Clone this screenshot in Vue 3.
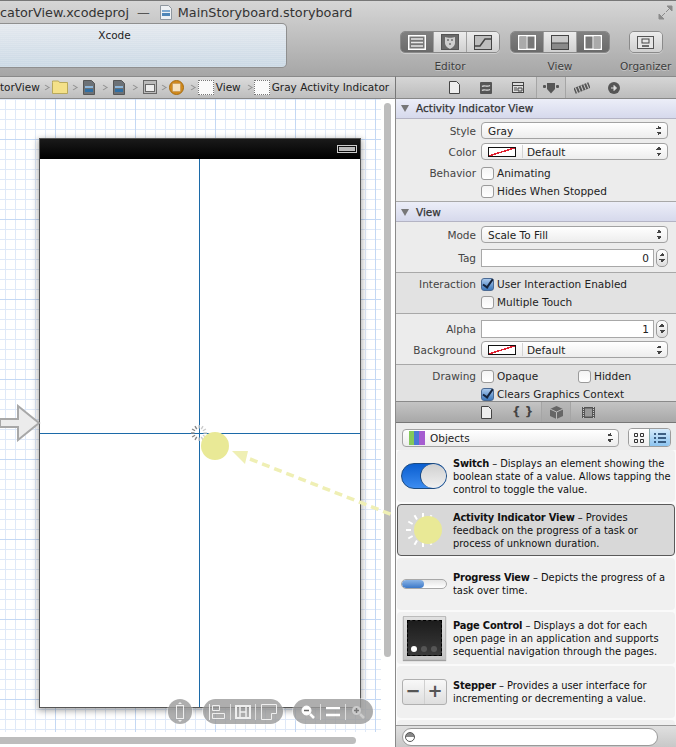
<script setup>
const crumbs = ['folder', 'file', 'file', 'scene', 'vc']
const library = [
  { id: 'switch', name: 'Switch', lines: ['– Displays an element showing the', 'boolean state of a value. Allows tapping the', 'control to toggle the value.'] },
  { id: 'activity', name: 'Activity Indicator View', lines: ['– Provides', 'feedback on the progress of a task or', 'process of unknown duration.'] },
  { id: 'progress', name: 'Progress View', lines: ['– Depicts the progress of a', 'task over time.'] },
  { id: 'page', name: 'Page Control', lines: ['– Displays a dot for each', 'open page in an application and supports', 'sequential navigation through the pages.'] },
  { id: 'stepper', name: 'Stepper', lines: ['– Provides a user interface for', 'incrementing or decrementing a value.'] },
]
const spokes = Array.from({ length: 12 }, (_, i) => i * 30)
</script>

<template>
  <div class="window">
    <header class="toolbar">
      <div class="title">
        <span>catorView.xcodeproj</span>
        <span class="dash">—</span>
        <svg class="doc" width="12" height="15" viewBox="0 0 12 15"><path d="M.5.5h8l3 3v11H.5z" fill="#eef1f4" stroke="#8f979f"/><path d="M2 5h8v2H2z" fill="#7fa9cf"/><path d="M2 8h8v3H2z" fill="#4f86b8"/></svg>
        <span>MainStoryboard.storyboard</span>
      </div>
      <div class="tools">
        <div class="status"><span>Xcode</span></div>
        <div class="tool-group editor">
          <div class="seg-row">
            <div class="seg on first">
              <svg width="18" height="15" viewBox="0 0 18 15"><rect x=".75" y=".75" width="16.5" height="13.5" fill="#777" stroke="#fff" stroke-width="1.5"/><path d="M3 4h12M3 7.500h12M3 11h12" stroke="#e8e8e8" stroke-width="1.300"/></svg>
            </div>
            <div class="seg">
              <svg width="18" height="16" viewBox="0 0 18 16"><rect x=".5" y=".5" width="17" height="15" fill="#6a6a6a" stroke="#555"/><path d="M4 3c2 1 8 1 10 0v6c0 3-3 5-5 6-2-1-5-3-5-6z" fill="#cfcfcf"/><path d="M6 6h2M10 6h2M8 10h2" stroke="#444" stroke-width="1.200"/></svg>
            </div>
            <div class="seg last">
              <svg width="18" height="15" viewBox="0 0 18 15"><rect x=".5" y=".5" width="17" height="14" fill="#bdbdbd" stroke="#444"/><path d="M1 11h5l5-7h6" fill="none" stroke="#444" stroke-width="1.500"/></svg>
            </div>
          </div>
          <span class="tool-label">Editor</span>
        </div>
        <div class="tool-group view">
          <div class="seg-row">
            <div class="seg on first">
              <svg width="18" height="15" viewBox="0 0 18 15"><rect x=".75" y=".75" width="16.5" height="13.5" fill="#777" stroke="#fff" stroke-width="1.500"/><rect x="1.500" y="1.500" width="7" height="12" fill="#aaa"/><path d="M9 1v13" stroke="#fff"/></svg>
            </div>
            <div class="seg">
              <svg width="18" height="15" viewBox="0 0 18 15"><rect x=".5" y=".5" width="17" height="14" fill="#c9c9c9" stroke="#444"/><rect x="1" y="8" width="16" height="6" fill="#8a8a8a"/><path d="M1 8h16" stroke="#444"/></svg>
            </div>
            <div class="seg on last">
              <svg width="18" height="15" viewBox="0 0 18 15"><rect x=".75" y=".75" width="16.5" height="13.5" fill="#777" stroke="#fff" stroke-width="1.500"/><rect x="9.500" y="1.500" width="7" height="12" fill="#aaa"/><path d="M9 1v13" stroke="#fff"/></svg>
            </div>
          </div>
          <span class="tool-label">View</span>
        </div>
        <div class="tool-group organizer">
          <div class="seg-row">
            <div class="seg first last">
              <svg width="17" height="13" viewBox="0 0 17 13"><rect x=".5" y=".5" width="16" height="12" fill="#e6e6e6" stroke="#555"/><rect x="5" y="3" width="7" height="4" fill="none" stroke="#444"/><path d="M5 10h7" stroke="#444" stroke-width="1.500"/></svg>
            </div>
          </div>
          <span class="tool-label">Organizer</span>
        </div>
        <svg class="expand" width="15" height="15" viewBox="0 0 15 15"><path d="M9 1h5v5zM1 9v5h5zM12 3 8 7M3 12l4-4" fill="#8b8b8b" stroke="#8b8b8b"/></svg>
      </div>
    </header>

    <div class="bars">
      <nav class="crumbs">
        <span class="crumb-text">torView</span>
        <template v-for="(c, i) in crumbs" :key="i">
          <i class="chev"></i>
          <svg v-if="c === 'folder'" width="16" height="14" viewBox="0 0 16 14"><path d="M.5 2.500V1h6l1 1.500h8v11H.5z" fill="#f4e189" stroke="#b8a95c"/></svg>
          <svg v-else-if="c === 'file'" class="crumb-file" width="12" height="15" viewBox="0 0 12 15"><path d="M.5.5h8l3 3v11H.5z" fill="#6c7176" stroke="#555"/><path d="M2 6h8v2H2z" fill="#8fb6d8"/><path d="M2 9h8v3H2z" fill="#2f6ea3"/></svg>
          <svg v-else-if="c === 'scene'" class="crumb-scene" width="14" height="14" viewBox="0 0 14 14"><rect x=".5" y=".5" width="13" height="13" fill="#bbb" stroke="#666"/><rect x="2.500" y="4.500" width="9" height="7" fill="#eee" stroke="#666"/></svg>
          <svg v-else class="crumb-vc" width="15" height="15" viewBox="0 0 15 15"><circle cx="7.500" cy="7.500" r="7" fill="#d18a1c" stroke="#a66c12"/><rect x="3.500" y="3.500" width="8" height="8" fill="#f5e2c0" stroke="#b88a4a" stroke-dasharray="1 1"/></svg>
        </template>
        <i class="chev"></i>
        <i class="view-box"></i><span class="crumb-text">View</span>
        <i class="chev wide"></i>
        <i class="view-box"></i><span class="crumb-text">Gray Activity Indicator</span>
      </nav>
      <div class="tabs">
        <svg width="11" height="13" viewBox="0 0 11 13"><path d="M.5.5h7l3 3v9H.5z" fill="#eee" stroke="#444"/></svg>
        <svg width="12" height="12" viewBox="0 0 12 12"><rect width="12" height="12" rx="1" fill="#555"/><path d="M2 4.500c2-2 5 1 8-1M2 8.500c2-2 5 1 8-1" fill="none" stroke="#ddd" stroke-width="1.200"/></svg>
        <svg width="12" height="11" viewBox="0 0 12 11"><rect x=".5" y=".5" width="11" height="10" fill="#ddd" stroke="#444"/><path d="M1 3.500h10M2 6h3M2 8h3M6 6h4v3H6z" stroke="#444" fill="none"/></svg>
        <div class="tab-on">
          <svg width="16" height="12" viewBox="0 0 16 12"><path d="M4 1h8v6l-4 4.500L4 7z" fill="#555"/><rect y="3" width="3" height="3" rx="1" fill="#555"/><rect x="13" y="3" width="3" height="3" rx="1" fill="#555"/></svg>
        </div>
        <svg width="16" height="12" viewBox="0 0 16 12"><g transform="rotate(-22 8 6)"><rect x="0" y="3" width="16" height="6" fill="#555"/><path d="M2 3v6M5 3v6M8 3v6M11 3v6M14 3v6" stroke="#ccc"/></g></svg>
        <svg class="tab-last" width="12" height="12" viewBox="0 0 12 12"><circle cx="6" cy="6" r="6" fill="#555"/><path d="M3 6h4M6 3.500 8.500 6 6 8.500z" stroke="#ddd" fill="#ddd"/></svg>
      </div>
    </div>

    <main class="body">
      <section class="canvas">
        <div class="device">
          <div class="statusbar">
            <span class="battery"><i></i></span>
          </div>
          <div class="screen">
            <i class="guide v"></i>
            <i class="guide h"></i>
            <svg class="spinner" width="20" height="20" viewBox="0 0 20 20">
              <line v-for="a in spokes" :key="a" x1="10" y1="2" x2="10" y2="5.500" :stroke="a > 180 ? '#888' : '#ccc'" stroke-width="1.400" :transform="`rotate(${a} 10 10)`"/>
            </svg>
          </div>
        </div>
        <svg class="entry" width="42" height="38" viewBox="0 0 42 38"><path d="M0 15h18V2l21 17-21 17V23H0z" fill="#ececec" stroke="#a8a8a8" stroke-width="2"/></svg>
        <div class="float-bar one">
          <svg width="14" height="20" viewBox="0 0 14 20"><rect x="3.500" y="3.500" width="7" height="13" fill="none" stroke="#eee"/><path d="M7 0 5 2h4zM7 20l-2-2h4z" fill="#eee"/></svg>
        </div>
        <div class="float-bar two">
          <svg width="16" height="16" viewBox="0 0 16 16"><path d="M.5 0v16M3.500 1.500h7v5h-7zM3.500 9.500h12v5h-12z" fill="none" stroke="#eee"/></svg>
          <i></i>
          <svg width="16" height="14" viewBox="0 0 16 14"><path d="M1 1h14v12H1z" fill="none" stroke="#eee" stroke-width="2"/><path d="M5 2v10M11 2v10M5 7h6" stroke="#eee" stroke-width="1.500"/></svg>
          <i></i>
          <svg width="16" height="16" viewBox="0 0 16 16"><path d="M.5.5h15v9h-5v6H.5z" fill="none" stroke="#eee"/></svg>
        </div>
        <div class="float-bar three">
          <svg width="14" height="14" viewBox="0 0 14 14"><circle cx="5.500" cy="5.500" r="4.500" fill="#fff" stroke="#fff"/><path d="M3 5.500h5" stroke="#666" stroke-width="1.500"/><path d="m9 9 4 4" stroke="#fff" stroke-width="2.500"/></svg>
          <i></i>
          <svg width="14" height="10" viewBox="0 0 14 10"><path d="M0 1h14M0 8h14" stroke="#fff" stroke-width="2.500"/></svg>
          <i></i>
          <svg width="14" height="14" viewBox="0 0 14 14"><circle cx="5.500" cy="5.500" r="4.500" fill="#ccc"/><path d="M3 5.500h5M5.500 3v5" stroke="#777" stroke-width="1.500"/><path d="m9 9 4 4" stroke="#ccc" stroke-width="2.500"/></svg>
        </div>
        <i class="scroll-v"></i>
        <i class="scroll-h"></i>
      </section>

      <aside class="side">
        <div class="inspector">
          <h3 class="section-head"><i class="tri"></i>Activity Indicator View</h3>
          <div class="fields first-fields">
            <div class="row"><label>Style</label><div class="select"><span>Gray</span><i class="updown"></i></div></div>
            <div class="row"><label>Color</label><div class="select"><i class="swatch"></i><b class="sep"></b><span class="swatch-text">Default</span><i class="updown"></i></div></div>
            <div class="row check behavior"><label>Behavior</label><i class="box"></i><span>Animating</span></div>
            <div class="row check"><label></label><i class="box"></i><span>Hides When Stopped</span></div>
          </div>
          <h3 class="section-head second"><i class="tri"></i>View</h3>
          <div class="fields view-a">
            <div class="row"><label>Mode</label><div class="select"><span>Scale To Fill</span><i class="updown"></i></div></div>
            <div class="row tall"><label>Tag</label><div class="input">0</div><div class="stepper-mini"><i></i></div></div>
          </div>
          <div class="fields view-b">
            <div class="row check"><label>Interaction</label><i class="box checked"></i><span>User Interaction Enabled</span></div>
            <div class="row check"><label></label><i class="box"></i><span>Multiple Touch</span></div>
          </div>
          <div class="fields view-c">
            <div class="row tall"><label>Alpha</label><div class="input">1</div><div class="stepper-mini"><i></i></div></div>
            <div class="row"><label>Background</label><div class="select"><i class="swatch"></i><b class="sep"></b><span class="swatch-text">Default</span><i class="updown"></i></div></div>
          </div>
          <div class="fields view-d">
            <div class="row check"><label>Drawing</label><i class="box"></i><span class="opaque">Opaque</span><i class="box"></i><span>Hidden</span></div>
            <div class="row check"><label></label><i class="box checked"></i><span>Clears Graphics Context</span></div>
          </div>
        </div>

        <div class="lib-tabs">
          <svg width="11" height="13" viewBox="0 0 11 13"><path d="M.5.5h7l3 3v9H.5z" fill="#eee" stroke="#444"/></svg>
          <span class="braces">{ }</span>
          <div class="tab-on">
            <svg width="13" height="13" viewBox="0 0 13 13"><path d="M6.500 0 13 3v7l-6.500 3L0 10V3z" fill="#666"/><path d="M0 3l6.500 3L13 3M6.500 6v7" stroke="#bbb" fill="none"/></svg>
          </div>
          <svg width="13" height="11" viewBox="0 0 13 11"><rect width="13" height="11" fill="#555"/><rect x="3" y="1.500" width="7" height="8" fill="#999"/><path d="M1.500 0v11M11.500 0v11" stroke="#ccc" stroke-dasharray="1 1"/></svg>
        </div>

        <div class="lib-filter">
          <div class="select objects">
            <svg width="16" height="14" viewBox="0 0 16 14"><rect width="5" height="14" fill="#84c95a"/><rect x="5" width="5" height="14" fill="#4a78d8"/><rect x="10" width="6" height="14" fill="#a55cd0"/></svg>
            <span>Objects</span><i class="updown"></i>
          </div>
          <div class="view-toggle">
            <div class="toggle">
              <svg width="10" height="10" viewBox="0 0 10 10"><path d="M.5.5h3v3h-3zM6.500.5h3v3h-3zM.5 6.500h3v3h-3zM6.500 6.500h3v3h-3z" fill="none" stroke="#333"/></svg>
            </div>
            <div class="toggle active">
              <svg width="12" height="10" viewBox="0 0 12 10"><path d="M0 1h2M4 1h8M0 5h2M4 5h8M0 9h2M4 9h8" stroke="#14365c" stroke-width="1.300"/></svg>
            </div>
          </div>
        </div>

        <ul class="library">
          <li v-for="item in library" :key="item.id" class="lib-item" :class="{ selected: item.id === 'activity' }">
            <div class="thumb">
              <div v-if="item.id === 'switch'" class="sw"><i></i></div>
              <div v-else-if="item.id === 'activity'" class="ai">
                <svg width="38" height="38" viewBox="0 0 38 38">
                  <line v-for="a in spokes" :key="a" x1="17" y1="2" x2="17" y2="7" stroke="#fff" stroke-width="2" :transform="`rotate(${a} 17 19)`"/>
                  <circle cx="22" cy="19" r="14" fill="#e9e996"/>
                </svg>
              </div>
              <div v-else-if="item.id === 'progress'" class="pv"><i></i></div>
              <div v-else-if="item.id === 'page'" class="pc"><div class="pc-in"><i class="w"></i><i></i><i></i></div></div>
              <div v-else class="st"><span>−</span><span>+</span></div>
            </div>
            <p class="desc">
              <template v-for="(l, i) in item.lines" :key="i"><b v-if="i === 0">{{ item.name }}</b> {{ l }}<br v-if="i < item.lines.length - 1" /></template>
            </p>
          </li>
          <li class="lib-item cut"></li>
        </ul>

        <div class="search"><div class="search-field"><i class="scope"></i></div></div>
      </aside>
    </main>

    <svg class="drag" width="676" height="747" viewBox="0 0 676 747">
      <circle cx="215" cy="446" r="14" fill="#e9e996" />
      <path d="M232 451 248 451 245 464z" fill="#efefb4"/>
      <path d="M250 459 395 516" stroke="#efefb4" stroke-width="3.500" stroke-dasharray="8 5" fill="none"/>
    </svg>
  </div>
</template>

<style scoped>
.window {
  position: relative;
  width: 676px;
  height: 747px;
  overflow: hidden;
  display: flex;
  flex-direction: column;
  background: #f0f0f0;
  color: #1c1c1c;
  font-family: "DejaVu Sans", sans-serif;
  font-size: 10.5px;
}
.toolbar {
  height: 76px;
  flex: none;
  box-sizing: border-box;
  border-top: 1px solid #777;
  background: linear-gradient(#d6d6d6, #a6a6a6);
  display: flex;
  flex-direction: column;
}
.title {
  height: 22px;
  display: flex;
  align-items: center;
  font-size: 12.800px;
  color: #333;
  gap: 8px;
  white-space: nowrap;
}
.dash { color: #555; }
.doc { margin-left: 2px; margin-right: -2px; flex: none; }
.tools {
  position: relative;
  flex: 1;
  display: flex;
}
.status {
  width: 287px;
  flex: none;
  height: 45px;
  box-sizing: border-box;
  border: 1px solid #8f8f8f;
  border-left: 0;
  border-radius: 0 5px 5px 0;
  background: repeating-linear-gradient(#ffffff22 0 1px, #ffffff00 1px 2px), linear-gradient(#e4e9ef, #cbd9e5);
  text-align: center;
  padding: 5px 57px 0 0;
  font-size: 10.5px;
  color: #222;
}
.tool-group {
  display: flex;
  flex-direction: column;
  align-items: center;
  margin-top: 8px;
  flex: none;
}
.editor { margin-left: 113px; }
.view { margin-left: 10px; }
.organizer { margin-left: 10px; }
.seg-row {
  display: flex;
  height: 22px;
  box-sizing: border-box;
  border: 1px solid #8a8a8a;
  border-radius: 5px;
  overflow: hidden;
  box-shadow: 0 1px 0 #ffffff55;
}
.seg {
  width: 32px;
  display: flex;
  align-items: center;
  justify-content: center;
  background: linear-gradient(#ececec, #d0d0d0);
}
.seg.on { background: linear-gradient(#808080, #6a6a6a); }
.seg + .seg { border-left: 1px solid #a0a0a0; }
.tool-label {
  margin-top: 7px;
  font-size: 10.5px;
  color: #3c3c3c;
  text-shadow: 0 1px 0 #ffffff55;
  white-space: nowrap;
}
.expand {
  position: absolute;
  left: 658px;
  top: -18px;
}
.bars {
  display: flex;
  height: 23px;
  flex: none;
}
.crumbs {
  width: 395px;
  flex: none;
  box-sizing: border-box;
  border-bottom: 1px solid #888;
  border-top: 1px solid #8a8a8a;
  padding-bottom: 1px;
  background: linear-gradient(#dcdcdc, #bdbdbd);
  display: flex;
  align-items: center;
  gap: 3px;
  overflow: hidden;
  white-space: nowrap;
}
.crumbs svg { flex: none; }
.crumb-file { margin: 0 3px; }
.crumb-scene { margin-left: 3px; }
.crumb-vc { margin-right: 2px; }
.crumb-text { font-size: 10.5px; color: #222; }
.chev {
  width: 5px;
  height: 5px;
  box-sizing: border-box;
  margin: 0 1px 0 0;
  border-top: 1px solid #8f8f8f;
  border-right: 1px solid #8f8f8f;
  transform: rotate(45deg) skew(-12deg, -12deg);
  flex: none;
}
.chev.wide { margin: 0 0 0 2px; }
.view-box {
  width: 14px;
  height: 13px;
  border: 1px dotted #777;
  background: #fafafa;
  flex: none;
  margin-right: -1px;
}
.tabs {
  flex: 1;
  box-sizing: border-box;
  border-left: 1px solid #777;
  border-top: 1px solid #8a8a8a;
  border-bottom: 1px solid #888;
  background: linear-gradient(#d6d6d6, #bcbcbc);
  display: flex;
  align-items: center;
  padding-left: 53px;
  gap: 20px;
}
.tabs svg { flex: none; }
.tab-on {
  width: 30px;
  flex: none;
  align-self: stretch;
  display: flex;
  align-items: center;
  justify-content: center;
  margin: 0 -12px 0 -8px;
  border-left: 1px solid #a5a5a5;
  border-right: 1px solid #a5a5a5;
  box-sizing: border-box;
  background: linear-gradient(#cacaca, #c2c2c2);
}
.tab-last { margin-left: -2px; }
.body {
  flex: 1;
  display: flex;
  min-height: 0;
}
.canvas {
  position: relative;
  width: 395px;
  flex: none;
  background-color: #fff;
  background-image:
    linear-gradient(90deg, #c4d8f4 1px, transparent 1px),
    linear-gradient(#c4d8f4 1px, transparent 1px),
    linear-gradient(90deg, #dfe9f8 1px, transparent 1px),
    linear-gradient(#dfe9f8 1px, transparent 1px);
  background-size: 80px 80px, 80px 80px, 10px 10px, 10px 10px;
  background-position: 55px 0, 0 40px, 5px 0, 0 0;
}
.canvas::after {
  content: "";
  position: absolute;
  right: 0;
  top: 0;
  bottom: 0;
  width: 14px;
  background: #fff;
}
.canvas::before {
  content: "";
  position: absolute;
  left: 0;
  right: 0;
  bottom: 0;
  height: 15px;
  background: #fff;
}
.device {
  position: absolute;
  left: 40px;
  top: 40px;
  width: 320px;
  height: 568px;
  display: flex;
  flex-direction: column;
  box-shadow: 0 0 0 1px #555, 0 2px 6px 2px #0005;
  background: #fff;
  z-index: 1;
}
.statusbar {
  height: 20px;
  background: linear-gradient(#1a1a1a, #000);
  display: flex;
  align-items: center;
  justify-content: flex-end;
  padding-right: 3px;
}
.battery {
  width: 20px;
  height: 8px;
  border: 1px solid #ccc;
  padding: 1px;
  box-sizing: border-box;
}
.battery i { display: block; height: 100%; background: #bbb; }
.screen { position: relative; flex: 1; }
.guide { position: absolute; background: #1c6aa8; }
.guide.v { left: 159px; top: 0; bottom: 0; width: 1px; }
.guide.h { top: 274px; left: 0; right: 0; height: 1px; }
.spinner { position: absolute; left: 149px; top: 264px; }
.entry { position: absolute; left: 0; top: 305px; z-index: 2; }
.float-bar {
  position: absolute;
  top: 600px;
  height: 25px;
  box-sizing: border-box;
  border-radius: 13px;
  background: #9a9a9acc;
  box-shadow: 0 0 0 1px #ffffff66;
  display: flex;
  align-items: center;
  justify-content: space-around;
  z-index: 3;
}
.float-bar i { width: 1px; height: 16px; background: #ddd; }
.one { left: 168px; width: 24px; }
.two { left: 203px; width: 80px; padding: 0 4px; }
.three { left: 293px; width: 80px; padding: 0 6px; }
.scroll-v {
  position: absolute;
  left: 384px;
  top: 4px;
  width: 7px;
  height: 554px;
  border-radius: 4px;
  background: #bdbdbd;
  z-index: 2;
}
.scroll-h {
  position: absolute;
  left: 0;
  top: 638px;
  width: 356px;
  height: 7px;
  border-radius: 0 4px 4px 0;
  background: #bdbdbd;
  z-index: 2;
}
.side {
  flex: 1;
  min-width: 0;
  border-left: 1px solid #8a8a8a;
  display: flex;
  flex-direction: column;
}
.inspector {
  height: 302px;
  flex: none;
  overflow: hidden;
  background: #e8e8e8;
}
.section-head {
  margin: 0;
  height: 20px;
  box-sizing: border-box;
  border-bottom: 1px solid #b4b4c4;
  display: flex;
  align-items: center;
  padding: 0 0 1px 5px;
  font-size: 10.5px;
  font-weight: normal;
  color: #333;
  -webkit-text-stroke: 0.25px #333;
  background: linear-gradient(#eceef8, #d6d9ec);
}
.section-head.second { padding: 1px 0 0 5px; }
.tri {
  width: 0;
  height: 0;
  margin-right: 7px;
  border-left: 4.500px solid transparent;
  border-right: 4.500px solid transparent;
  border-top: 7px solid #777;
}
.fields {
  border-bottom: 1px solid #a8a8a8;
  padding: 3px 8px 3px 0;
  background: #ececec;
}
.first-fields { height: 83px; box-sizing: border-box; padding-top: 1px; }
.first-fields .row { margin-bottom: 0; }
.first-fields .behavior { margin-top: 2px; }
.view-a { height: 51px; box-sizing: border-box; padding-top: 2px; }
.view-b { height: 41px; box-sizing: border-box; padding-top: 2px; background: #e2e2e2; }
.view-c { height: 51px; box-sizing: border-box; padding-top: 4px; }
.view-c .row { margin-bottom: 1px; }
.view-c .row.tall { height: 21px; margin-bottom: 0; }
.view-d { height: 41px; box-sizing: border-box; padding-top: 2px; background: #e2e2e2; border-bottom: 0; }
.row {
  display: flex;
  align-items: center;
  height: 21px;
  margin-bottom: 1px;
}
.row.check { height: 18px; margin-bottom: 0; }
.row.tall { height: 23px; }
.row label {
  width: 80px;
  flex: none;
  margin-right: 5px;
  text-align: right;
  color: #444;
}
.select {
  flex: 1;
  height: 17px;
  box-sizing: border-box;
  position: relative;
  display: flex;
  align-items: center;
  padding-left: 6px;
  gap: 5px;
  border: 1px solid #a2a2a2;
  border-radius: 4px;
  background: linear-gradient(#ffffff, #ededed);
  color: #222;
}
.updown {
  position: absolute;
  right: 5px;
  top: 3px;
  width: 6px;
  height: 9px;
  background:
    linear-gradient(135deg, transparent 50%, #444 50%) 0 0 / 3px 3px no-repeat,
    linear-gradient(-135deg, transparent 50%, #444 50%) 3px 0 / 3px 3px no-repeat,
    linear-gradient(45deg, transparent 50%, #444 50%) 0 6px / 3px 3px no-repeat,
    linear-gradient(-45deg, transparent 50%, #444 50%) 3px 6px / 3px 3px no-repeat;
}
.swatch {
  width: 26px;
  height: 8px;
  border: 1px solid #111;
  background: linear-gradient(to top left, #fff 46%, #e02030 46% 56%, #fff 56%);
  flex: none;
}
.sep { width: 1px; height: 13px; background: #d4d4d4; margin: 0 0 0 1px; }
.swatch-text { margin-left: -1px; }
.input {
  flex: 1;
  height: 18px;
  box-sizing: border-box;
  border: 1px solid #a8a8a8;
  background: #fff;
  text-align: right;
  padding: 1px 4px 0 0;
  line-height: 15px;
  color: #222;
}
.stepper-mini {
  width: 10px;
  height: 16px;
  margin-left: 2px;
  border: 1px solid #9c9c9c;
  border-radius: 5px;
  background: linear-gradient(#fff, #ddd);
  position: relative;
}
.stepper-mini i {
  position: absolute;
  left: 2px;
  top: 3px;
  width: 6px;
  height: 9px;
  background:
    linear-gradient(135deg, transparent 50%, #444 50%) 0 0 / 3px 3px no-repeat,
    linear-gradient(-135deg, transparent 50%, #444 50%) 3px 0 / 3px 3px no-repeat,
    linear-gradient(45deg, transparent 50%, #444 50%) 0 6px / 3px 3px no-repeat,
    linear-gradient(-45deg, transparent 50%, #444 50%) 3px 6px / 3px 3px no-repeat;
}
.box {
  width: 11px;
  height: 11px;
  flex: none;
  position: relative;
  border: 1px solid #9a9a9a;
  border-radius: 3px;
  background: linear-gradient(#f4f4f4, #ffffff);
  margin-right: 3px;
}
.box.checked { background: linear-gradient(#a8c8ec, #3c78bc); border-color: #4a6a94; }
.box.checked::after {
  content: "";
  position: absolute;
  left: 3px;
  top: -2px;
  width: 4px;
  height: 9px;
  border-right: 2px solid #14233c;
  border-bottom: 2px solid #14233c;
  transform: rotate(35deg);
}
.row.check span { color: #222; }
.opaque { width: 81px; flex: none; }
.lib-tabs {
  height: 22px;
  flex: none;
  box-sizing: border-box;
  border-top: 1px solid #8a8a8a;
  border-bottom: 1px solid #777;
  background: linear-gradient(#c4c4c4, #a8a8a8);
  display: flex;
  align-items: center;
  padding-left: 85px;
  gap: 20px;
}
.lib-tabs .tab-on { background: linear-gradient(#b8b8b8, #a8a8a8); margin: 0 -9px 0 -12px; }
.braces { font-weight: bold; font-size: 12px; color: #444; }
.lib-filter {
  height: 27px;
  flex: none;
  display: flex;
  align-items: center;
  padding: 2px 5px 0 6px;
  background: #ececec;
  box-sizing: border-box;
}
.objects { height: 18px; flex: none; width: 217px; }
.view-toggle {
  margin-left: 9px;
  display: flex;
  height: 17px;
  border: 1px solid #9c9c9c;
  border-radius: 4px;
  overflow: hidden;
}
.toggle {
  width: 20px;
  display: flex;
  align-items: center;
  justify-content: center;
  background: linear-gradient(#fff, #eee);
}
.toggle.active { background: linear-gradient(#d6ebfb, #8cc4f0); border-left: 1px solid #8aa; }
.library {
  flex: 1;
  min-height: 0;
  overflow: hidden;
  list-style: none;
  margin: 0;
  padding: 0 1px;
  background: #fafafa;
}
.lib-item {
  display: flex;
  align-items: center;
  height: 52px;
  box-sizing: border-box;
  margin-bottom: 2px;
  border-radius: 4px;
  background: #f0f0f0;
  border: 1px solid transparent;
}
.lib-item.selected {
  background: #d8d8d8;
  border-color: #5a5a5a;
}
.lib-item.cut { height: 12px; margin: 0; }
.thumb {
  width: 55px;
  flex: none;
  display: flex;
  align-items: center;
  justify-content: center;
  padding-right: 3px;
  box-sizing: border-box;
}
.desc {
  margin: 0;
  line-height: 13px;
  font-size: 9.900px;
  color: #111;
  white-space: nowrap;
}
.desc b { font-weight: bold; letter-spacing: -0.2px; }
.sw {
  width: 46px;
  height: 26px;
  box-sizing: border-box;
  border: 1px solid #1b4a80;
  border-radius: 13px;
  background: linear-gradient(#0a5ed0, #3c8cf0);
  display: flex;
  justify-content: flex-end;
}
.sw i {
  width: 25px;
  height: 24px;
  border-radius: 50%;
  background: linear-gradient(#d0d0d0, #f0f0f0);
  border-left: 1px solid #1b4a80;
}
.ai { line-height: 0; margin-left: 2px; }
.pv {
  width: 44px;
  height: 8px;
  border: 1px solid #a8a8a8;
  border-radius: 5px;
  background: linear-gradient(#e4e4e4, #fff);
  overflow: hidden;
}
.pv i {
  display: block;
  width: 22px;
  height: 8px;
  border-radius: 4px;
  background: linear-gradient(#8ab4e6, #3c78c8);
}
.pc {
  width: 43px;
  height: 44px;
  box-sizing: border-box;
  padding: 3px;
  background: linear-gradient(#e0e0e0, #c4c4c4);
  border: 1px solid #bbb;
  box-shadow: 0 1px 1px #0005;
}
.pc-in {
  height: 100%;
  box-sizing: border-box;
  border: 1px dashed #000;
  background: linear-gradient(#1c1c1c, #3a3a3a);
  display: flex;
  align-items: flex-end;
  justify-content: center;
  gap: 4px;
  padding-bottom: 3px;
}
.pc-in i { width: 6px; height: 6px; border-radius: 50%; background: #555; }
.pc-in i.w { background: #fff; }
.st {
  width: 45px;
  height: 26px;
  box-sizing: border-box;
  border: 1px solid #b0b0b0;
  border-radius: 3px;
  background: linear-gradient(#f8f8f8, #dedede);
  display: flex;
  color: #555;
  font-weight: bold;
  font-size: 18px;
  line-height: 22px;
}
.st span { flex: 1; text-align: center; }
.st span + span { border-left: 1px solid #d0d0d0; }
.search {
  height: 22px;
  flex: none;
  box-sizing: border-box;
  border-top: 1px solid #999;
  background: linear-gradient(#e0e0e0, #c8c8c8);
  padding: 2px 0 0 6px;
}
.search-field {
  width: 256px;
  height: 18px;
  box-sizing: border-box;
  border: 1px solid #9a9a9a;
  border-radius: 9px;
  background: #fff;
  display: flex;
  align-items: center;
  padding-left: 2px;
}
.scope {
  width: 10px;
  height: 10px;
  box-sizing: border-box;
  border: 1px solid #555;
  border-radius: 50%;
  background: linear-gradient(#888 50%, #fff 50%);
}
.drag {
  position: absolute;
  left: 0;
  top: 0;
  pointer-events: none;
  z-index: 3;
}
</style>
